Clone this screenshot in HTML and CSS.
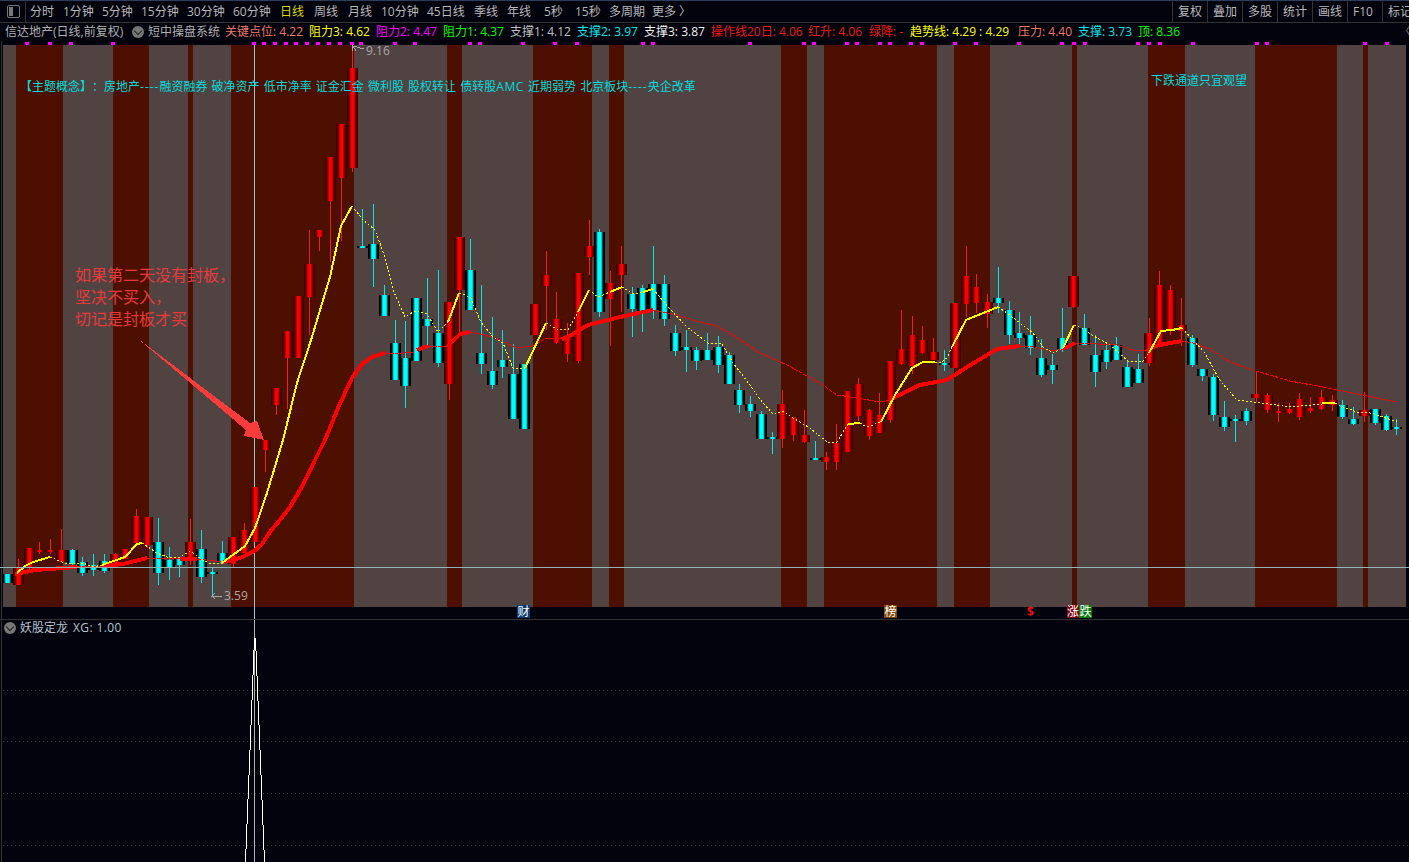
FILE: index.html
```html
<!DOCTYPE html>
<html>
<head>
    <title>信达地产 日线</title>
    <meta charset="utf-8">
    <link rel="stylesheet" href="styles.css">
</head>
<body>
    <div class="toolbar">
        <div class="panel-toggle"><span class="toggle-icon"></span></div>
        <div class="periods">
            <span>分时</span>
            <span>1分钟</span>
            <span>5分钟</span>
            <span>15分钟</span>
            <span>30分钟</span>
            <span>60分钟</span>
            <span class="active">日线</span>
            <span>周线</span>
            <span>月线</span>
            <span>10分钟</span>
            <span>45日线</span>
            <span>季线</span>
            <span>年线</span>
            <span>5秒</span>
            <span>15秒</span>
            <span>多周期</span>
            <span>更多 〉</span>
        </div>
        <div class="tools">
            <span>复权</span>
            <span>叠加</span>
            <span>多股</span>
            <span>统计</span>
            <span>画线</span>
            <span>F10</span>
            <span>标记</span>
        </div>
    </div>

    <div class="info">
        <span class="grey">信达地产(日线,前复权)</span>
        <span class="round-btn"></span>
        <span class="grey">短中操盘系统</span>
        <span class="salmon">关键点位: 4.22</span>
        <span class="yellow">阻力3: 4.62</span>
        <span class="magenta">阻力2: 4.47</span>
        <span class="green">阻力1: 4.37</span>
        <span class="light">支撑1: 4.12</span>
        <span class="cyan">支撑2: 3.97</span>
        <span class="white">支撑3: 3.87</span>
        <span class="red">操作线20日: 4.06</span>
        <span class="red">红升: 4.06</span>
        <span class="red">绿降: -</span>
        <span class="yellow">趋势线: 4.29 : 4.29</span>
        <span class="salmon">压力: 4.40</span>
        <span class="cyan">支撑: 3.73</span>
        <span class="green">顶: 8.36</span>
        <span class="collapse">〈</span>
    </div>

    <div class="main-panel">
        <svg id="mainChart" class="chart" width="1409" height="578" viewBox="0 41 1409 578"></svg>
        <div class="theme">【主题概念】：房地产<span class="dash">----</span>融资融券 破净资产 低市净率 证金汇金 微利股 股权转让 债转股<span class="latin">AMC</span> 近期弱势 北京板块<span class="dash">----</span>央企改革</div>
        <div class="watch">下跌通道只宜观望</div>
        <div class="note">如果第二天没有封板，<br>坚决不买入，<br>切记是封板才买</div>
        <div class="price high">9.16</div>
        <div class="price low">3.59</div>
        <span class="mark mark-cai">财</span>
        <span class="mark mark-bang">榜</span>
        <span class="mark mark-dollar">$</span>
        <span class="mark mark-up">涨</span>
        <span class="mark mark-down">跌</span>
    </div>

    <div class="sub-panel">
        <svg id="subChart" class="chart" width="1409" height="242" viewBox="0 620 1409 242"></svg>
        <div class="sub-title">
            <span class="round-btn"></span>
            <span>妖股定龙</span>
            <span class="sub-value">XG: 1.00</span>
        </div>
    </div>

    <script src="chart.js"></script>
</body>
</html>
```

FILE: styles.css
```css
* {
    box-sizing: border-box;
}

html, body {
    margin: 0;
    height: 862px;
    overflow: hidden;
}

body {
    background-color: #02030d;
    color: #b8b8b8;
    font-family: "Open Sans", "Noto Sans CJK SC", sans-serif;
    font-size: 12px;
    text-spacing-trim: space-all;
}

.toolbar {
    display: flex;
    height: 23px;
    border-top: 1px solid #2c3c5c;
    border-bottom: 1px solid #333;
    overflow: hidden;
}

.panel-toggle {
    flex: 0 0 26px;
    padding: 4px 0 0 7px;
    border-right: 1px solid #333;
}

.toggle-icon {
    display: block;
    width: 13px;
    height: 13px;
    border: 1px solid #777;
    border-radius: 2px;
    background: linear-gradient(to right, #777 0, #777 45%, transparent 45%);
    background-clip: content-box;
    padding: 1px;
}

.periods {
    display: grid;
    grid-template-columns: 33px 39px 39px 46px 46px 47px 34px 34px 33px 46px 47px 33px 37px 31px 34px 43px auto;
    padding-left: 4px;
    line-height: 21px;
    white-space: nowrap;
}

.periods .active {
    color: #d8d800;
}

.tools {
    display: flex;
    flex: 0 0 237px;
    margin-left: auto;
    line-height: 21px;
    overflow: hidden;
}

.tools span {
    flex: 0 0 35px;
    border-left: 1px solid #333;
    padding-left: 5px;
    white-space: nowrap;
}

.info {
    display: grid;
    grid-template-columns: 127px 16px 77px 84px 67px 67px 67px 67px 67px 67px 97px 61px 41px 108px 60px 60px auto;
    height: 18px;
    padding-left: 5px;
    line-height: 17px;
    white-space: nowrap;
    position: relative;
}

.round-btn {
    flex: none;
    width: 12px;
    height: 12px;
    margin-top: 3px;
    border-radius: 50%;
    background-color: #777;
    position: relative;
}

.round-btn::after {
    content: "";
    position: absolute;
    left: 3px;
    top: 2px;
    width: 5px;
    height: 5px;
    border-right: 1px solid #222;
    border-bottom: 1px solid #222;
    transform: rotate(45deg);
}

.collapse {
    position: absolute;
    left: 1399px;
    top: 0;
    color: #777;
}

.grey { color: #b0b0b0; }
.light { color: #c0c0c0; }
.white { color: #f0f0f0; }
.salmon { color: #f07868; }
.yellow { color: #ffff00; }
.magenta { color: #ff00ff; }
.green { color: #00ff00; }
.cyan { color: #00e8e8; }
.red { color: #f01818; }

.main-panel {
    position: relative;
    height: 579px;
    border-bottom: 1px solid #333;
}

.sub-panel {
    position: relative;
    height: 242px;
}

.chart {
    display: block;
}

.theme, .watch {
    position: absolute;
    color: #00dcdc;
    white-space: nowrap;
}

.theme {
    left: 20px;
    top: 36px;
    word-spacing: 1px;
}

.dash {
    letter-spacing: 1px;
}

.latin {
    letter-spacing: 0.6px;
}

.watch {
    left: 1151px;
    top: 30px;
}

.note {
    position: absolute;
    left: 75px;
    top: 223px;
    color: #e83a3a;
    font-size: 16px;
    line-height: 22px;
    white-space: nowrap;
}

.price {
    position: absolute;
    color: #a8a8a8;
}

.high {
    left: 366px;
    top: 1px;
}

.low {
    left: 224px;
    top: 546px;
}

.mark {
    position: absolute;
    top: 564px;
    width: 13px;
    height: 13px;
    color: #fff;
    font-size: 12px;
    line-height: 13px;
    text-align: center;
}

.mark-cai { left: 517px; background-color: #0c3c70; }
.mark-bang { left: 884px; background-color: #7c4808; }
.mark-dollar { left: 1024px; color: #f01010; font-weight: bold; }
.mark-up { left: 1067px; width: 12px; background-color: #800010; }
.mark-down { left: 1079px; background-color: #087810; }

.sub-title {
    position: absolute;
    left: 4px;
    top: 0;
    display: flex;
    gap: 4px;
    height: 16px;
    line-height: 15px;
    color: #b8c4d0;
}

.sub-title .round-btn {
    margin-top: 2px;
}

.sub-value {
    margin-left: 1px;
    letter-spacing: 0.4px;
}
```

FILE: chart.js
```js
// Red / grey background stripes, start and end x of every red one
var redBands = [[16, 63], [113, 149], [188, 193], [231, 354], [447, 462], [533, 592], [609, 624],
    [781, 807], [824, 937], [954, 990], [1072, 1077], [1148, 1185], [1255, 1337], [1363, 1368]];

var ticks = [27, 50, 71, 113, 254, 264, 275, 286, 296, 307, 318, 329, 340, 352, 361, 395, 415, 470, 480,
    523, 555, 577, 643, 653, 750, 804, 814, 847, 857, 880, 890, 911, 922, 955, 976, 1019, 1062, 1074,
    1085, 1138, 1149, 1160, 1193, 1257, 1267, 1365, 1387];

// Candles in date order: [r or c, body top, body bottom, wick top, wick bottom]
var candles = [
    ["c", 574, 583, 574, 583], ["r", 567, 585, 559, 585], ["r", 548, 568, 548, 569], ["r", 550, 552, 542, 554],
    ["r", 550, 552, 539, 554], ["r", 550, 562, 529, 562], ["c", 550, 564, 549, 566], ["c", 562, 573, 557, 576],
    ["c", 565, 570, 554, 576], ["c", 561, 571, 554, 573], ["r", 554, 566, 553, 566], ["r", 549, 559, 549, 559],
    ["r", 516, 543, 509, 546], ["r", 517, 545, 517, 548], ["c", 542, 573, 518, 585], ["c", 560, 567, 547, 580],
    ["c", 559, 565, 557, 577], ["r", 542, 560, 519, 565], ["c", 549, 577, 530, 583], ["c", 572, 573, 568, 596],
    ["c", 553, 563, 541, 563], ["r", 537, 564, 537, 567], ["r", 530, 553, 523, 553], ["r", 487, 542, 487, 542],
    ["r", 440, 450, 440, 472], ["r", 388, 405, 388, 415], ["r", 331, 358, 331, 409], ["r", 296, 358, 296, 358],
    ["r", 264, 297, 230, 335], ["r", 230, 237, 230, 251], ["r", 157, 201, 157, 262], ["r", 124, 178, 124, 241],
    ["r", 68, 168, 45, 172], ["c", 246, 247, 209, 247], ["c", 244, 259, 204, 287], ["c", 295, 316, 285, 316],
    ["c", 343, 380, 320, 380], ["c", 358, 386, 321, 408], ["c", 298, 361, 298, 361], ["c", 319, 326, 278, 345],
    ["c", 333, 363, 270, 367], ["r", 302, 384, 302, 400], ["r", 237, 290, 237, 333], ["c", 270, 310, 239, 310],
    ["c", 353, 364, 285, 374], ["c", 371, 385, 317, 389], ["c", 360, 367, 330, 378], ["c", 374, 419, 344, 419],
    ["c", 364, 429, 364, 429], ["r", 304, 335, 304, 335], ["r", 275, 286, 251, 330], ["r", 319, 343, 292, 344],
    ["r", 335, 354, 323, 362], ["r", 273, 361, 273, 363], ["r", 246, 257, 220, 275], ["c", 232, 312, 229, 317],
    ["r", 283, 299, 271, 346], ["r", 264, 275, 246, 312], ["c", 294, 309, 287, 337], ["c", 288, 312, 285, 332],
    ["c", 284, 310, 246, 319], ["c", 284, 319, 275, 326], ["c", 333, 351, 325, 356], ["c", 347, 350, 330, 372],
    ["c", 350, 361, 347, 370], ["c", 350, 360, 333, 360], ["c", 347, 365, 336, 373], ["c", 355, 384, 352, 384],
    ["c", 390, 405, 384, 413], ["c", 404, 411, 396, 417], ["c", 414, 439, 411, 439], ["c", 437, 438, 432, 454],
    ["r", 404, 439, 390, 448], ["r", 417, 435, 417, 441], ["r", 435, 442, 410, 443], ["c", 458, 460, 441, 460],
    ["r", 457, 462, 452, 470], ["r", 443, 462, 424, 470], ["r", 391, 452, 391, 452], ["r", 384, 416, 378, 421],
    ["r", 410, 436, 409, 440], ["r", 415, 433, 393, 433], ["r", 361, 420, 361, 423], ["r", 349, 364, 310, 365],
    ["r", 335, 366, 316, 374], ["r", 340, 353, 326, 354], ["r", 352, 360, 338, 360], ["c", 363, 365, 350, 371],
    ["r", 303, 368, 303, 368], ["r", 276, 304, 246, 317], ["r", 287, 303, 274, 313], ["r", 302, 314, 294, 328],
    ["c", 298, 303, 267, 313], ["c", 310, 335, 301, 344], ["c", 333, 338, 312, 347], ["c", 335, 348, 316, 355],
    ["c", 358, 375, 339, 377], ["c", 365, 370, 354, 384], ["c", 338, 349, 308, 352], ["r", 276, 307, 276, 308],
    ["c", 328, 345, 314, 345], ["c", 355, 372, 335, 387], ["c", 350, 362, 343, 369], ["c", 345, 360, 337, 360],
    ["c", 367, 387, 361, 387], ["c", 369, 383, 354, 383], ["r", 333, 363, 318, 366], ["r", 285, 345, 271, 345],
    ["r", 290, 330, 285, 335], ["r", 325, 331, 298, 346], ["c", 338, 365, 335, 367], ["c", 369, 376, 369, 381],
    ["c", 377, 415, 374, 421], ["c", 417, 427, 401, 431], ["c", 419, 421, 415, 442], ["c", 411, 421, 408, 425],
    ["r", 394, 398, 371, 402], ["r", 395, 410, 393, 413], ["r", 411, 413, 403, 422], ["r", 409, 413, 403, 414],
    ["r", 399, 417, 393, 420], ["r", 408, 411, 397, 413], ["r", 397, 409, 390, 410], ["r", 400, 405, 395, 411],
    ["c", 405, 417, 400, 419], ["c", 419, 424, 407, 425], ["r", 410, 416, 392, 422], ["c", 409, 423, 409, 425],
    ["c", 416, 430, 414, 431], ["c", 427, 429, 419, 435]
];

// Moving averages, split into bold and thin runs: [bold?, "x,y x,y ..."]
var yellowLine = [
    [1, "17,573 25,566 33,562 50,557"], [0, "50,557 67,564 83,563 93,567 102,565"],
    [1, "102,565 125,557 137,544 142,543"], [0, "142,543 157,553 167,557 180,557 190,551 200,558 210,564 222,563"],
    [1, "222,563 245,546 255,528 267,493 283,440 297,383 312,337 330,277 341,226 352,206"],
    [0, "352,206 363,220 375,230 385,257 393,290 405,317 415,311 427,314 438,332 448,322"],
    [1, "448,322 459,293"], [0, "459,293 470,297 481,322 493,337 503,343 513,368 525,368"],
    [1, "525,368 546,323"], [0, "546,323 557,329 568,330 578,312"], [1, "578,312 589,290"],
    [0, "589,290 598,297 610,292"], [1, "610,292 622,287"], [0, "622,287 633,294 643,292"], [1, "643,292 653,289"],
    [0, "653,289 668,307 687,327 700,337 708,343 722,344 733,363 750,385 762,402 773,414 783,411 793,418 810,428 827,442 837,442 848,424"],
    [1, "848,424 860,423"], [0, "860,423 867,427 881,422"],
    [1, "881,422 895,395 912,368 923,362 935,362"], [0, "935,362 940,363 947,358 952,347"],
    [1, "952,347 966,320 998,307"], [0, "998,307 1007,313 1033,333 1043,347 1053,353 1063,348"],
    [1, "1063,348 1074,325"], [0, "1074,325 1082,328 1092,335 1110,345 1128,361 1142,362 1149,353"],
    [1, "1149,353 1161,331 1172,330 1182,328"],
    [0, "1182,328 1205,353 1215,372 1222,383 1237,400 1253,402 1270,404 1290,407 1322,404"],
    [1, "1322,403 1335,403"], [0, "1335,403 1343,407 1357,412 1367,412 1377,415 1397,422"]
];

var redLine = [
    [1, "15,574 35,570 77,567"], [0, "77,567 103,566"], [1, "103,566 123,564 147,558"], [0, "147,558 180,559"],
    [1, "180,559 197,559"], [0, "197,559 223,562"],
    [1, "223,562 240,558 253,552 262,544 270,532 280,520 290,507 303,485 315,460 325,440 338,408 352,378 362,364 372,357 385,353"],
    [0, "385,353 393,354 415,352"], [1, "417,350 428,346"], [0, "428,346 447,347"], [1, "447,347 460,334 470,332"],
    [0, "470,332 493,337 517,348 532,346 547,338 562,339"],
    [1, "562,339 568,337 588,325 620,317 653,310"],
    [0, "653,310 673,314 700,322 717,326 733,335 760,353 787,365 820,383 837,395 857,398 880,402 890,400"],
    [1, "890,400 895,397 920,385 947,380 967,367 997,349 1020,346"],
    [0, "1020,346 1033,347 1053,351 1063,349"], [1, "1063,349 1075,343"],
    [0, "1075,343 1097,344 1117,345 1133,350 1147,351"], [1, "1147,351 1155,346 1170,343 1182,341"],
    [0, "1182,341 1193,343 1210,349 1230,362 1253,370 1290,381 1323,387 1353,393 1397,402"]
];

var NS = "http://www.w3.org/2000/svg";

function add(svg, tag, attrs) {
    var el = document.createElementNS(NS, tag);
    for (var key in attrs) {
        el.setAttribute(key, attrs[key]);
    }
    svg.appendChild(el);
    return el;
}

// stops: [offset, colour] for the left half, mirrored for the right half
function addGradient(svg, id, stops) {
    var grad = add(svg, "linearGradient", { id: id });
    stops.forEach(function(stop) {
        add(grad, "stop", { offset: stop[0], "stop-color": stop[1] });
    });
    stops.slice().reverse().forEach(function(stop) {
        add(grad, "stop", { offset: 1 - stop[0], "stop-color": stop[1] });
    });
}

function drawLine(svg, runs, color, boldWidth, dash) {
    runs.forEach(function(run) {
        add(svg, "polyline", {
            points: run[1],
            fill: "none",
            stroke: color,
            "stroke-width": run[0] ? boldWidth : 1,
            "stroke-linejoin": "round",
            "stroke-dasharray": run[0] ? "none" : dash
        });
    });
}

function drawMain(svg) {
    var defs = add(svg, "defs", {});
    addGradient(defs, "redBody", [[0, "#3c0000"], [0.2, "#5c0000"], [0.32, "#c00000"], [0.42, "#ff0000"]]);
    addGradient(defs, "cyanBody", [[0, "#000000"], [0.18, "#000000"], [0.27, "#00a0a0"], [0.36, "#00ffff"]]);

    add(svg, "rect", { x: 3, y: 45, width: 1403, height: 562, fill: "#524343" });
    redBands.forEach(function(band) {
        add(svg, "rect", { x: band[0], y: 45, width: band[1] - band[0], height: 562, fill: "#4d1000" });
    });
    add(svg, "rect", { x: 1, y: 41, width: 1, height: 578, fill: "#333" });

    ticks.forEach(function(x) {
        add(svg, "rect", { x: x - 2, y: 42, width: 4, height: 3, fill: "#ff00ff" });
    });

    add(svg, "rect", { x: 254, y: 45, width: 1, height: 574, fill: "#8fc8c8" });

    candles.forEach(function(c, i) {
        var x = Math.round(7 + 10.77 * i);
        var isRed = c[0] === "r";
        add(svg, "rect", { x: x, y: c[3], width: 1, height: c[4] - c[3], fill: isRed ? "#f02020" : "#00e8e8" });
        add(svg, "rect", {
            x: x - 5,
            y: c[1],
            width: 11,
            height: Math.max(c[2] - c[1], 2),
            fill: isRed ? "url(#redBody)" : "url(#cyanBody)"
        });
    });

    drawLine(svg, redLine, "#ff0000", 4, "4 1");
    drawLine(svg, yellowLine, "#ffff00", 2, "2 2");

    add(svg, "rect", { x: 0, y: 567, width: 1409, height: 1, fill: "#90b4b4" });

    add(svg, "polygon", { points: "137,338 250,423 257,421 264,440 244,436 246,430", fill: "#f83c3c" });
    add(svg, "polyline", { points: "364,49 353,46 356,51 353,46 352,51", fill: "none", stroke: "#a8a8a8" });
    add(svg, "polyline", { points: "222,596 212,596 215,593 212,596 215,599", fill: "none", stroke: "#a8a8a8" });
}

function drawSub(svg) {
    [690, 741, 793, 845].forEach(function(y) {
        add(svg, "line", { x1: 3, y1: y + 0.5, x2: 1409, y2: y + 0.5, stroke: "#3a3a3a", "stroke-dasharray": "1 3" });
    });
    add(svg, "rect", { x: 1, y: 620, width: 1, height: 242, fill: "#333" });
    add(svg, "rect", { x: 254, y: 620, width: 1, height: 242, fill: "#b0b0b0" });
    add(svg, "polyline", { points: "245.5,862 254.5,638 255.5,638 264.5,862", fill: "none", stroke: "#ffffff" });
}

var mainChart = document.getElementById("mainChart");
var subChart = document.getElementById("subChart");
mainChart.setAttribute("shape-rendering", "crispEdges");
subChart.setAttribute("shape-rendering", "crispEdges");
drawMain(mainChart);
drawSub(subChart);
```
